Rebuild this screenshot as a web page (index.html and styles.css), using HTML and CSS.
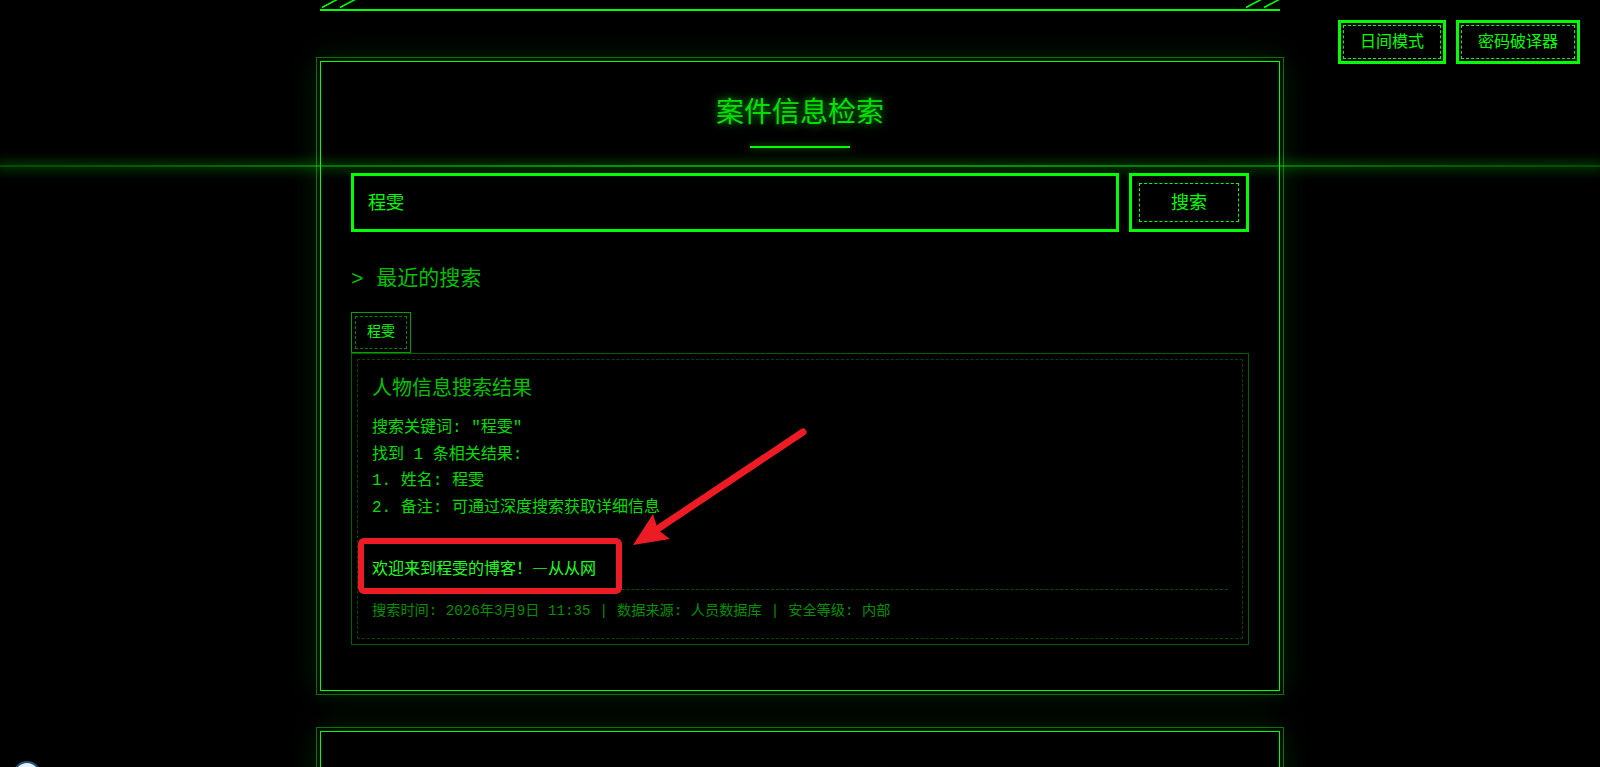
FILE: index.html
```html
<!DOCTYPE html>
<html lang="zh-CN">
<head>
<meta charset="utf-8">
<title>案件信息检索</title>
<link rel="stylesheet" href="styles.css">
</head>
<body>
<div class="top-actions">
  <button class="btn-mode">日间模式</button>
  <button class="btn-mode">密码破译器</button>
</div>
<div class="scanline"></div>
<main class="container">
  <div class="header-edge">
    <svg class="slashes" width="36" height="9" viewBox="0 0 36 9"><path d="M2 7.5 L18 -1 M20 7.5 L36 -1" stroke="#00ff00" stroke-width="1.6" fill="none"/></svg>
    <svg class="slashes" width="36" height="9" viewBox="0 0 36 9"><path d="M2 7.5 L18 -1 M20 7.5 L36 -1" stroke="#00ff00" stroke-width="1.6" fill="none"/></svg>
  </div>
  <section class="panel">
    <h2 class="panel-title">案件信息检索</h2>
    <div class="title-rule"></div>
    <div class="search-row">
      <input class="search-input" type="text" value="程雯">
      <button class="search-btn">搜索</button>
    </div>
    <h3 class="section-title">&gt; 最近的搜索</h3>
    <div class="recent-list">
      <button class="recent-tag">程雯</button>
    </div>
    <div class="results">
      <div class="results-inner">
        <h4 class="results-title">人物信息搜索结果</h4>
        <div class="results-lines">
          <p>搜索关键词: "程雯"</p>
          <p>找到 1 条相关结果:</p>
          <p>1. 姓名: 程雯</p>
          <p>2. 备注: 可通过深度搜索获取详细信息</p>
        </div>
        <p class="welcome">欢迎来到程雯的博客！—从从网</p>
        <div class="results-footer">搜索时间: 2026年3月9日 11:35<span class="sep">|</span>数据来源: 人员数据库<span class="sep">|</span>安全等级: 内部</div>
      </div>
    </div>
  </section>
  <section class="panel panel-next">
    <h2 class="panel-title">线索分析</h2>
    <div class="title-rule"></div>
  </section>
</main>
<svg class="annotation" width="1600" height="767" viewBox="0 0 1600 767">
  <rect x="361" y="541" width="258" height="50" rx="3" fill="none" stroke="#ed1c24" stroke-width="6"/>
  <line x1="803" y1="432" x2="656" y2="530" stroke="#ed1c24" stroke-width="7" stroke-linecap="round"/>
  <polygon points="633,545 653,514 658,530 670,539" fill="#ed1c24"/>
</svg>
<div class="float-ball"></div>
</body>
</html>
```
FILE: styles.css
```css
* { box-sizing: border-box; }
html, body { margin: 0; padding: 0; overflow: hidden; }
body {
  background: #000;
  color: #00ff00;
  font-family: "Liberation Mono", "Noto Sans CJK SC", monospace;
  height: 767px;
}
button, input { font-family: "Liberation Mono", "Noto Sans CJK SC", monospace; }

.top-actions {
  position: fixed;
  top: 20px;
  right: 20px;
  display: flex;
  gap: 10px;
  z-index: 5;
}
.btn-mode {
  position: relative;
  background: #000;
  color: #00ff00;
  border: 3px solid #00ff00;
  font-size: 16px;
  line-height: 20px;
  padding: 10px 19px 8px;
}
.btn-mode::before {
  content: "";
  position: absolute;
  inset: 2px;
  border: 1px dashed #00ff00;
}

.scanline {
  position: fixed;
  left: 0;
  right: 0;
  top: 165px;
  height: 2px;
  background: linear-gradient(90deg, rgba(0,255,0,.3), rgba(0,255,0,.6) 40%, rgba(0,255,0,.6) 60%, rgba(0,255,0,.3));
  box-shadow: 0 0 12px 3px rgba(0,255,0,.28);
  z-index: 4;
}

.container { width: 960px; margin: 0 auto; }

.header-edge {
  height: 11px;
  border-bottom: 2px solid #00ff00;
  display: flex;
  justify-content: space-between;
  align-items: flex-end;
}
.slashes { display: block; }

.panel {
  margin-top: 50px;
  border: 1px solid #00ff00;
  outline: 1px solid rgba(0,255,0,.45);
  outline-offset: 3px;
  box-shadow: 0 0 30px rgba(0,255,0,.16);
  padding: 33px 30px 30px;
}
.panel + .panel { margin-top: 40px; }
.panel-next { padding-top: 40px; }
.panel-next .panel-title { padding-left: 190px; text-shadow: 0 0 10px rgba(0,255,0,.35); }

.panel-title {
  margin: 0;
  text-align: center;
  font-size: 28px;
  line-height: 40px;
  font-weight: normal;
  color: #00e000;
  text-shadow: 0 0 10px rgba(0,255,0,.7);
}
.title-rule {
  width: 100px;
  height: 2px;
  margin: 11px auto 0;
  background: #00ff00;
  box-shadow: 0 0 6px rgba(0,255,0,.6);
}

.search-row {
  display: flex;
  gap: 10px;
  margin-top: 25px;
  height: 59px;
}
.search-input {
  flex: 1;
  min-width: 0;
  background: #000;
  color: #00ff00;
  border: 3px solid #00ff00;
  font-size: 18px;
  padding: 0 14px 4px;
  outline: none;
}
.search-btn {
  position: relative;
  width: 120px;
  background: #000;
  color: #00ff00;
  border: 3px solid #00ff00;
  font-size: 18px;
  padding: 0 0 4px;
}
.search-btn::before {
  content: "";
  position: absolute;
  inset: 7px;
  border: 1px dashed #00ff00;
}

.section-title {
  margin: 33px 0 0;
  font-size: 21px;
  line-height: 30px;
  font-weight: normal;
  color: #00c000;
}

.recent-list {
  margin-top: 17px;
  display: flex;
  gap: 10px;
}
.recent-tag {
  position: relative;
  height: 41px;
  padding: 0 15px 5px;
  background: #000;
  color: #00ff00;
  border: 1px solid #00a000;
  font-size: 14px;
}
.recent-tag::before {
  content: "";
  position: absolute;
  inset: 3px;
  border: 1px dashed #008000;
}

.results {
  border: 1px solid #006000;
  padding: 5px;
  margin-bottom: 15px;
}
.results-inner {
  border: 1px dashed #004800;
  padding: 16px 14px 17px;
}
.results-title {
  margin: 0 0 11px;
  font-size: 20px;
  line-height: 28px;
  font-weight: normal;
  color: #00c000;
}
.results-lines p {
  margin: 0;
  font-size: 16px;
  line-height: 26.7px;
  color: #00dd00;
}
.welcome {
  margin: 32px 0 0;
  padding-bottom: 3px;
  font-family: "Noto Sans CJK SC", sans-serif;
  font-size: 16px;
  line-height: 26.7px;
  color: #22ff22;
}
.results-footer {
  margin-top: 5px;
  border-top: 1px dashed #005000;
  padding-top: 11px;
  font-size: 14.2px;
  line-height: 20px;
  color: #009000;
}
.sep { margin: 0 9px; }

.annotation {
  position: absolute;
  top: 0;
  left: 0;
  pointer-events: none;
  z-index: 10;
}

.float-ball {
  position: fixed;
  left: 13px;
  top: 761px;
  width: 28px;
  height: 28px;
  border-radius: 50%;
  background: radial-gradient(circle at 50% 40%, #ffffff, #c8d9ea);
  border: 2px solid #24507a;
  z-index: 11;
}
```
